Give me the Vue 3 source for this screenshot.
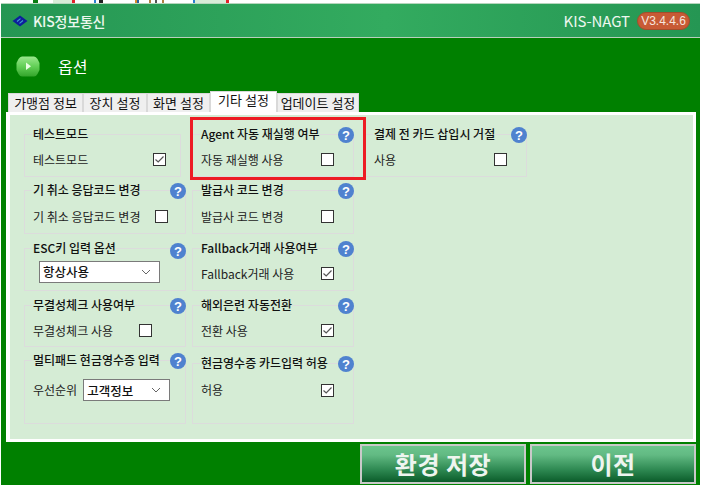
<script setup>
const columns = [
  [
    { title: '테스트모드', label: '테스트모드', kind: 'check', checked: true, h: 43, w: 157, gap: 65, help: false },
    { title: '기 취소 응답코드 변경', label: '기 취소 응답코드 변경', kind: 'check', checked: false, h: 44, mt: 13, gap: 15, help: true },
    { title: 'ESC키 입력 옵션', kind: 'select', value: '항상사용', h: 43, mt: 14, help: true, selW: 121, helpTop: -6 },
    { title: '무결성체크 사용여부', label: '무결성체크 사용', kind: 'check', checked: false, h: 42, mt: 14, gap: 26, help: true },
    { title: '멀티패드 현금영수증 입력', label: '우선순위', kind: 'select', value: '고객정보', h: 64, mt: 13, help: true, selW: 87, tall: true },
  ],
  [
    { title: 'Agent 자동 재실행 여부', label: '자동 재실행 사용', kind: 'check', checked: false, h: 43, help: true },
    { title: '발급사 코드 변경', label: '발급사 코드 변경', kind: 'check', checked: false, h: 44, mt: 13, help: true },
    { title: 'Fallback거래 사용여부', label: 'Fallback거래 사용', kind: 'check', checked: true, h: 43, mt: 14, help: true },
    { title: '해외은련 자동전환', label: '전환 사용', kind: 'check', checked: true, h: 42, mt: 14, help: true },
    { title: '현금영수증 카드입력 허용', label: '허용', kind: 'check', checked: true, h: 61, mt: 16, help: true, tall: true },
  ],
  [
    { title: '결제 전 카드 삽입시 거절', label: '사용', kind: 'check', checked: false, h: 43, help: true },
  ],
]
const tabs = [
  { name: '가맹점 정보', w: 75 },
  { name: '장치 설정', w: 64 },
  { name: '화면 설정', w: 63 },
  { name: '기타 설정', w: 67, active: true },
  { name: '업데이트 설정', w: 82 },
]
const strip = [
  { w: 33, c: '#fff' }, { w: 5, c: '#0a7d12' }, { w: 15, c: '#fff' }, { w: 19, c: '#d8ecd8' },
  { w: 3, c: '#e3222b' }, { w: 19, c: '#fff' }, { w: 2, c: '#2a7fd0' }, { w: 3, c: '#fff' }, { w: 4, c: '#222' },
  { w: 32, c: '#fff' }, { w: 2, c: '#d88a2a' }, { w: 2, c: '#2a5fa0' }, { w: 10, c: '#fff' }, { w: 2, c: '#b08040' },
  { w: 4, c: '#fff' }, { w: 2, c: '#555' }, { w: 5, c: '#fff' }, { w: 2, c: '#b08040' }, { w: 29, c: '#fff' },
  { w: 2, c: '#2a7fd0' }, { w: 31, c: '#d8ecd8' }, { w: 3, c: '#e3222b' }, { w: 472, c: '#fff' },
]
</script>

<template>
  <div class="page">
    <div class="strip">
      <i v-for="(s, i) in strip" :key="i" :style="{ width: s.w + 'px', background: s.c }"></i>
    </div>
    <div class="window">
      <header class="bar">
        <div class="brand">
          <svg class="logo" width="16" height="12" viewBox="0 0 16 12">
            <path d="M8 0.5 L15.5 6 L8 11.5 L0.5 6 Z" fill="#0d1f9c"/>
            <path d="M5 6.5 L8.5 3.6 M7.5 8.4 L11 5.5" fill="none" stroke="#3f9fd0" stroke-width="1.1"/>
          </svg>
          <span>KIS정보통신</span>
        </div>
        <div class="right">
          <span class="nagt">KIS-NAGT</span>
          <span class="ver">V3.4.4.6</span>
        </div>
      </header>

      <div class="heading">
        <svg class="play" width="24" height="21" viewBox="0 0 24 21">
          <defs>
            <linearGradient id="pg" x1="0" y1="0" x2="0" y2="1">
              <stop offset="0" stop-color="#9be88e"/>
              <stop offset="0.5" stop-color="#62cf56"/>
              <stop offset="1" stop-color="#33a52b"/>
            </linearGradient>
          </defs>
          <path d="M6 0.5 H18 Q20 0.5 21.5 3 L23.5 7 V14 L21.5 18 Q20 20.5 18 20.5 H6 Q4 20.5 2.5 18 L0.5 14 V7 L2.5 3 Q4 0.5 6 0.5 Z" fill="url(#pg)"/>
          <path d="M10 6.5 L15 10.2 L10 14 Z" fill="#eaffe4"/>
        </svg>
        <span>옵션</span>
      </div>

      <nav class="tabs">
        <div v-for="t in tabs" :key="t.name" class="tab" :class="{ active: t.active }" :style="{ width: t.w + 'px' }">{{ t.name }}</div>
      </nav>

      <main class="panel">
        <div class="cols">
          <div v-for="(col, ci) in columns" :key="ci" class="col">
            <section
              v-for="g in col"
              :key="g.title"
              class="group"
              :class="{ tall: g.tall, lift: g.tall && g.kind === 'check' }"
              :style="{ height: g.h + 'px', marginTop: (g.mt || 0) + 'px', width: g.w ? g.w + 'px' : undefined }"
            >
              <h3 class="title"><span>{{ g.title }}</span></h3>
              <svg
                v-if="g.help"
                class="help"
                width="16"
                height="16"
                viewBox="0 0 16 16"
                :style="g.helpTop ? { top: g.helpTop + 'px' } : undefined"
              >
                <circle cx="8" cy="8" r="8" fill="#4f82cf"/>
                <text x="8" y="12.5" text-anchor="middle" class="q">?</text>
              </svg>
              <div class="row">
                <span v-if="g.label" class="label">{{ g.label }}</span>
                <span
                  v-if="g.kind === 'check'"
                  class="box"
                  :style="{ marginLeft: g.gap ? g.gap + 'px' : undefined }"
                  :class="{ auto: !g.gap }"
                >
                  <svg v-if="g.checked" width="11" height="11" viewBox="0 0 11 11">
                    <path d="M1.5 5.5 L4.2 8 L9.5 2.5" fill="none" stroke="#555" stroke-width="1.2"/>
                  </svg>
                </span>
                <span v-else class="select" :style="{ width: g.selW + 'px' }">
                  <span>{{ g.value }}</span>
                  <svg width="10" height="6" viewBox="0 0 10 6">
                    <path d="M1 1 L5 5 L9 1" fill="none" stroke="#666" stroke-width="1"/>
                  </svg>
                </span>
              </div>
            </section>
          </div>
        </div>
        <div class="mark"></div>
      </main>

      <footer class="actions">
        <button class="btn">환경 저장</button>
        <button class="btn">이전</button>
      </footer>
    </div>
  </div>
</template>

<style>
html, body { margin: 0; background: #fff; overflow: hidden; }
</style>

<style scoped>
.page {
  width: 701px;
  height: 489px;
  background: #fff;
  font-family: "Noto Sans CJK KR", "Noto Sans", sans-serif;
  overflow: hidden;
}
.strip { display: flex; height: 3px; background: #fff; }
.strip i { display: block; height: 3px; flex: none; }
.window {
  width: 699px;
  height: 482px;
  margin-left: 1px;
  background: #008000;
  display: flex;
  flex-direction: column;
}
.bar {
  height: 35px;
  flex: none;
  box-sizing: border-box;
  border-top: 1px solid #b6d6bd;
  border-bottom: 1px solid #b9cfbd;
  background: linear-gradient(90deg, #259653 0%, #33ab5f 55%, #259653 100%);
  display: flex;
  align-items: center;
  justify-content: space-between;
  padding: 0 10px 0 11px;
  color: #eef7ef;
}
.brand { display: flex; align-items: center; gap: 5px; font-size: 14px; font-weight: 500; letter-spacing: -0.2px; }
.right { display: flex; align-items: center; gap: 7px; }
.nagt { font-size: 15px; letter-spacing: -0.1px; }
.ver {
  width: 53px;
  height: 18px;
  box-sizing: border-box;
  border-radius: 9px;
  background: #c85a35;
  border: 1px solid #a34e2c;
  font-family: "Liberation Sans", sans-serif;
  font-size: 12px;
  line-height: 16px;
  text-align: center;
  color: #f6e6df;
}
.heading {
  height: 54px;
  flex: none;
  display: flex;
  align-items: center;
  padding-left: 15px;
  padding-top: 2px;
  box-sizing: border-box;
  color: #fff;
  font-size: 16px;
  gap: 18px;
}
.tabs { display: flex; height: 20px; flex: none; padding-left: 7px; align-items: flex-end; }
.tab {
  height: 19px;
  box-sizing: border-box;
  background: #efefef;
  border: 1px solid #d9d9d9;
  border-bottom: none;
  font-size: 13px;
  line-height: 17px;
  text-align: center;
  color: #111;
  flex: none;
}
.tab.active { height: 21px; background: #fff; line-height: 16px; }
.panel {
  position: relative;
  width: 690px;
  height: 330px;
  flex: none;
  margin-left: 5px;
  box-sizing: border-box;
  border: 3px solid #fff;
  border-left-width: 4px;
  background: #d5ecd5;
  padding: 19px 0 0 14px;
}
.cols { display: flex; gap: 6px; align-items: flex-start; }
.col { width: 162px; display: flex; flex-direction: column; }
.col:last-child { margin-left: 5px; }
.group {
  position: relative;
  box-sizing: border-box;
  border: 1px solid #dcdcdc;
  color: #222;
  font-size: 12px;
}
.title {
  position: absolute;
  left: 7px;
  top: -10px;
  margin: 0;
  font-size: 12px;
  font-weight: 500;
  line-height: 18px;
  color: #111;
  background: #d5ecd5;
  padding: 0 0 0 1px;
  white-space: nowrap;
}
.help { position: absolute; right: -1px; top: -8px; }
.q { font: 700 13px "Liberation Sans", sans-serif; fill: #fff; }
.row {
  display: flex;
  align-items: center;
  height: 100%;
  box-sizing: border-box;
  padding: 8px 6px 0 8px;
}
.tall .row { align-items: flex-start; padding-top: 20px; }
.lift .label { margin-top: -3px; }
.label { white-space: nowrap; color: #222; }
.box {
  width: 13px;
  height: 13px;
  box-sizing: border-box;
  border: 1px solid #333;
  background: #fff;
  display: flex;
  align-items: center;
  justify-content: center;
  flex: none;
}
.box svg { display: block; }
.box.auto { margin-left: auto; margin-right: 13px; }
.select {
  height: 22px;
  box-sizing: border-box;
  border: 1px solid #7a7a7a;
  background: #fff;
  display: flex;
  align-items: center;
  justify-content: space-between;
  padding: 0 8px 0 3px;
  margin-left: 6px;
  margin-top: -4px;
  color: #111;
  font-size: 12.5px;
  font-weight: 500;
  flex: none;
}
.tall .select { margin-top: -2px; }
.mark {
  position: absolute;
  left: 180px;
  top: 2px;
  width: 176px;
  height: 63px;
  box-sizing: border-box;
  border: 3px solid #ed1c24;
  pointer-events: none;
}
.actions { display: flex; gap: 4px; justify-content: flex-end; padding: 2px 4px 0 0; }
.btn {
  width: 166px;
  height: 40px;
  box-sizing: border-box;
  border: 2px solid #c9c9c9;
  background: linear-gradient(180deg, #6bc58d 0%, #62ba83 25%, #2f8a53 65%, #0b5c2a 100%);
  color: #eef5ef;
  font-family: inherit;
  font-size: 24px;
  font-weight: 700;
  padding: 0;
  letter-spacing: 0.5px;
  line-height: 1;
}
</style>
